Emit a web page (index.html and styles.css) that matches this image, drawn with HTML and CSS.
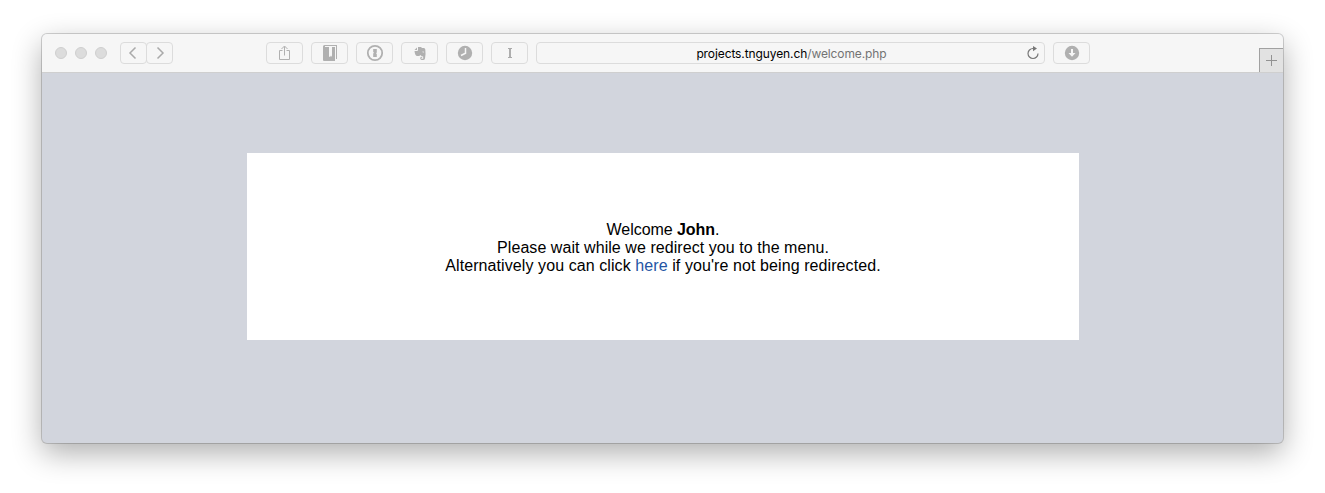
FILE: index.html
```html
<!DOCTYPE html>
<html lang="en">
<head>
<meta charset="utf-8">
<title>Welcome</title>
<link rel="stylesheet" href="styles.css">
</head>
<body>
<div class="window">
  <header class="toolbar">
    <div class="lights"><i></i><i></i><i></i></div>
    <nav class="history">
      <span class="btn back"><svg width="25" height="20" viewBox="0 0 25 20"><path d="M14.500 4.500 9 10l5.500 5.500" fill="none" stroke="#aaa" stroke-width="1.500"/></svg></span>
      <span class="btn forward"><svg width="25" height="20" viewBox="0 0 25 20"><path d="M10.500 4.500 16 10l-5.500 5.500" fill="none" stroke="#aaa" stroke-width="1.500"/></svg></span>
    </nav>
    <div class="tools">
      <span class="btn"><svg width="35" height="20" viewBox="0 0 35 20"><path d="M15.500 7.500h-3v9h10v-9h-3M17.500 12.500V3.500M14.500 6l3-3 3 3" fill="none" stroke="#b0b0b0"/></svg></span>
      <span class="btn"><svg width="35" height="20" viewBox="0 0 35 20"><path d="M11 3.500Q11 2 12.500 2H25v14h-1V3H13v1h10v14H12q-1 0-1-1zM17 4v9.500l1 .500 1-1.500 1 1.500V4z" fill="#b0b0b0" fill-rule="evenodd"/></svg></span>
      <span class="btn"><svg width="35" height="20" viewBox="0 0 35 20"><circle cx="18" cy="10" r="7.200" fill="none" stroke="#b0b0b0" stroke-width="1.800"/><path d="M16.200 6h3.600v3.600l-.8.700.8.700v3h-3.600v-3.600l.8-.7-.8-.7z" fill="#b0b0b0"/></svg></span>
      <span class="btn"><svg width="35" height="20" viewBox="0 0 35 20"><path d="M16 4h3l1 1h2q1 0 1.300 1.500.7 5-.3 9Q22.700 17 21 17h-1.500q-1.500-.5-1.300-2 .3-1.400 2-1.300v1h-.9v1h1.900v-2.200q-2.200-.5-2.700-1.500-.5 1-2 1h-1.300Q13 13 12.500 8H15q1 0 1-1zM15 4.500V7h-2.500z" fill="#b0b0b0"/><path d="M20.500 8.500q1.500-.4 1.700 1l-1.700-.2z" fill="#f6f6f6"/></svg></span>
      <span class="btn"><svg width="35" height="20" viewBox="0 0 35 20"><circle cx="18" cy="10" r="7.200" fill="#b0b0b0"/><path d="M18.500 5v5.200L14 12.500" fill="none" stroke="#f6f6f6" stroke-width="1.500"/></svg></span>
      <span class="btn"><svg width="35" height="20" viewBox="0 0 35 20"><path d="M16 5.500h4M16 14.500h4" stroke="#aaa"/><path d="M18 5v10" stroke="#aaa" stroke-width="1.900"/></svg></span>
      <div class="btn address">
        <span class="url">projects.tnguyen.ch<span class="path">/welcome.php</span></span>
        <svg class="reload" width="16" height="18" viewBox="0 0 16 18"><path d="M8 4.500a5 5 0 1 0 5 5" fill="none" stroke="#777" stroke-width="1.200"/><path d="M8 2v5.200l4-2.700z" fill="#777"/></svg>
      </div>
      <span class="btn"><svg width="35" height="20" viewBox="0 0 35 20"><circle cx="18" cy="10" r="7.200" fill="#b0b0b0"/><path d="M17 6h2v4h2.500L18 13.800 14.500 10H17z" fill="#f6f6f6"/></svg></span>
    </div>
    <span class="newtab"><svg width="23" height="23" viewBox="0 0 23 23"><path d="M6 11.500h11M11.500 6v11" stroke="#929292"/></svg></span>
  </header>
  <main class="page">
    <div class="message">
      <p class="line welcome">Welcome <b>John</b>.</p>
      <p class="line wait">Please wait while we redirect you to the menu.</p>
      <p class="line alt">Alternatively you can click <a class="link">here</a> if you're not being redirected.</p>
    </div>
  </main>
</div>
</body>
</html>
```
FILE: styles.css
```css
* { box-sizing: border-box; }
body {
  margin: 0;
  height: 493px;
  padding: 34px 42px 50px;
  background: #fff;
  overflow: hidden;
  font-family: "Liberation Sans", Arial, sans-serif;
}
svg { display: block; }
.window {
  width: 1241px;
  height: 409px;
  border-radius: 5px;
  background: #d2d5dd;
  box-shadow: 0 0 0 1px rgba(0, 0, 0, .17), 0 10px 30px rgba(0, 0, 0, .32);
  overflow: hidden;
}
.toolbar {
  display: flex;
  align-items: flex-start;
  height: 39px;
  padding: 8px 0 0 13px;
  background: #f6f6f6;
  border-bottom: 1px solid #cfcfcf;
}
.lights { display: flex; gap: 8px; padding-top: 5px; }
.lights i {
  width: 12px;
  height: 12px;
  border: 1px solid #cfcfcf;
  border-radius: 50%;
  background: #dcdcdc;
}
.history { display: flex; margin-left: 13px; }
.btn {
  display: block;
  width: 37px;
  height: 22px;
  border: 1px solid #dcdcdc;
  border-radius: 4px;
}
.back, .forward { width: 27px; }
.forward { margin-left: -1px; }
.tools { display: flex; gap: 8px; margin-left: 93px; }
.address {
  display: flex;
  align-items: center;
  width: 509px;
  padding-left: 21px;
}
.url {
  flex: 1;
  padding-top: 2px;
  text-align: center;
  font-family: Inter, "Liberation Sans", sans-serif;
  font-size: 12px;
  line-height: 20px;
  letter-spacing: -.1px;
  color: #000;
  white-space: nowrap;
}
.path { color: #737373; }
.reload { margin-right: 3px; }
.newtab {
  width: 24px;
  height: 24px;
  margin: 6px 0 0 auto;
  border-top: 1px solid #a1a1a1;
  border-left: 1px solid #a1a1a1;
  background: #e2e2e2;
}
.page { padding: 80px 204px 103px 205px; }
.message {
  height: 187px;
  padding-top: 68px;
  background: #fff;
  text-align: center;
}
.line {
  margin: 0;
  font-size: 16px;
  line-height: 18px;
  color: #000;
  white-space: nowrap;
}
.welcome { letter-spacing: -.05px; }
.wait { letter-spacing: .06px; }
.alt { letter-spacing: .085px; }
.link { color: #2455a4; }
```
